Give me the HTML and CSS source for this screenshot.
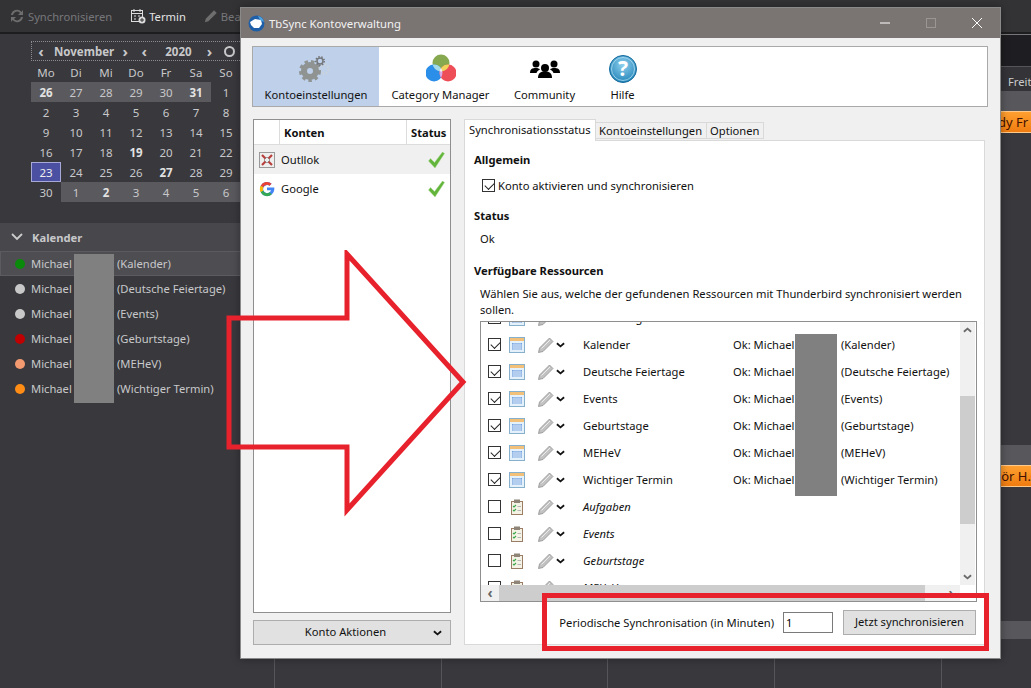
FILE: index.html
```html
<!DOCTYPE html>
<html>
<head>
  <meta charset="utf-8">
  <title>TbSync Kontoverwaltung</title>
  <link rel="stylesheet" href="styles.css">
</head>
<body>
  <svg class="defs" width="0" height="0">
    <defs>
      <symbol id="cal" viewBox="0 0 16 16">
        <rect x="0.5" y="0.5" width="15" height="15" fill="#e4f0fa" stroke="#86b0cc"/>
        <rect x="1" y="1" width="14" height="3" fill="#f3c07a"/>
        <rect x="3" y="6" width="10" height="7" fill="#6f9fe0"/>
        <path d="M5 6v7M7 6v7M9 6v7M11 6v7M3 8h10M3 10h10M3 12h10" stroke="#dbe8f8" stroke-width="0.8"/>
      </symbol>
      <symbol id="task" viewBox="0 0 16 16">
        <rect x="2.5" y="2.5" width="11" height="13" fill="#f5f3e6" stroke="#9a7d64"/>
        <rect x="5" y="0.5" width="6" height="3.5" fill="#8f8478"/>
        <path d="M4 7l1 1 2-2M4 11l1 1 2-2" fill="none" stroke="#3aa84a" stroke-width="1.1"/>
        <path d="M8.5 7.5h3.5M8.5 11.5h3.5" stroke="#b5b5b5"/>
      </symbol>
      <symbol id="pencil" viewBox="0 0 16 16">
        <path d="M0.500 15.500l1-4.500L11.500 1l3.500 3.500L5 14.500z" fill="#c2c2c2" stroke="#8f8f8f" stroke-width="0.8"/>
        <path d="M3.500 11.500l8.500-8.500" stroke="#ececec"/>
      </symbol>
      <symbol id="chev" viewBox="0 0 10 6">
        <path d="M1 1l4 3.500L9 1" fill="none" stroke="#111" stroke-width="2"/>
      </symbol>
      <symbol id="tick" viewBox="0 0 16 16">
        <path d="M0 9l2-2.500 4 4L14 0l2 1.500L6.500 16z" fill="#62b53a" stroke="#a6d890" stroke-width="0.5"/>
      </symbol>
      <clipPath id="clipGreen"><circle cx="15" cy="9" r="8.500"/></clipPath>
      <clipPath id="clipBlue"><circle cx="8" cy="19" r="8.500"/></clipPath>
      <clipPath id="clipRed"><circle cx="22" cy="19" r="8.500"/></clipPath>
      <radialGradient id="helpBlue" cx="0.5" cy="0.35" r="0.7">
        <stop offset="0" stop-color="#8fd0ee"/>
        <stop offset="1" stop-color="#1b7fb5"/>
      </radialGradient>
    </defs>
  </svg>

  <div class="app">
    <div class="app-toolbar">
      <div class="tool disabled">
        <svg width="16" height="16" viewBox="0 0 16 16"><path d="M2 7a6 6 0 0 1 10.500-3L14 2v5H9l2-2A4 4 0 0 0 4 7zM14 9a6 6 0 0 1-10.500 3L2 14V9h5l-2 2a4 4 0 0 0 7-2z" fill="#6e6e6e"/></svg>
        <span>Synchronisieren</span>
      </div>
      <div class="tool">
        <svg width="16" height="16" viewBox="0 0 16 16"><rect x="1.500" y="2.500" width="11" height="11" fill="none" stroke="#ddd"/><path d="M4 1v3M10 1v3M1.500 5.500h11M4 8h2M8 8h2M4 11h2" stroke="#ddd"/><circle cx="12" cy="12" r="3.500" fill="#ddd"/><path d="M10 12h4M12 10v4" stroke="#333"/></svg>
        <span>Termin</span>
      </div>
      <div class="tool disabled">
        <svg width="14" height="14" viewBox="0 0 16 16"><path d="M1 15l1-4L11.500 1.500l3 3L5 14z" fill="#6e6e6e"/></svg>
        <span>Bearbeiten</span>
      </div>
    </div>

    <div class="app-body">
      <aside class="sidebar">
        <div class="minimonth">
          <div class="mm-head">
            <span class="mm-arrow">‹</span><b class="mm-month">November</b><span class="mm-arrow">›</span>
            <span class="mm-arrow">‹</span><b class="mm-year">2020</b><span class="mm-arrow">›</span>
            <span class="mm-today"></span>
          </div>
          <div class="mm-grid">
            <span>Mo</span><span>Di</span><span>Mi</span><span>Do</span><span>Fr</span><span>Sa</span><span>So</span>
            <span class="other bold">26</span><span class="other">27</span><span class="other">28</span><span class="other">29</span><span class="other">30</span><span class="other bold">31</span><span>1</span>
            <span>2</span><span>3</span><span>4</span><span>5</span><span>6</span><span>7</span><span>8</span>
            <span>9</span><span>10</span><span>11</span><span>12</span><span>13</span><span>14</span><span>15</span>
            <span>16</span><span>17</span><span>18</span><span class="bold">19</span><span>20</span><span>21</span><span>22</span>
            <span class="selected">23</span><span>24</span><span>25</span><span>26</span><span class="bold">27</span><span>28</span><span>29</span>
            <span>30</span><span class="other">1</span><span class="other bold">2</span><span class="other">3</span><span class="other">4</span><span class="other">5</span><span class="other">6</span>
          </div>
        </div>

        <div class="cal-head">
          <svg width="12" height="8" viewBox="0 0 12 8"><path d="M1 1l5 5 5-5" fill="none" stroke="#ccc" stroke-width="1.800"/></svg>
          <b>Kalender</b>
        </div>
        <ul class="cal-list">
          <li class="active"><i class="dot green"></i><span class="cal-owner">Michael</span>(Kalender)</li>
          <li><i class="dot grey"></i><span class="cal-owner">Michael</span>(Deutsche Feiertage)</li>
          <li><i class="dot grey"></i><span class="cal-owner">Michael</span>(Events)</li>
          <li><i class="dot red"></i><span class="cal-owner">Michael</span>(Geburtstage)</li>
          <li><i class="dot salmon"></i><span class="cal-owner">Michael</span>(MEHeV)</li>
          <li><i class="dot orange"></i><span class="cal-owner">Michael</span>(Wichtiger Termin)</li>
        </ul>
      </aside>

      <main class="week-view">
        <div class="week-tabs"></div>
        <div class="week-days">Freit</div>
        <div class="week-band"></div>
        <div class="week-event event-top">ddy Fr</div>
        <div class="week-gap first"></div>
        <div class="week-band"></div>
        <div class="week-event event-mid">sör H.G</div>
        <div class="week-gap second"></div>
        <div class="week-band short"></div>
        <div class="week-gap lines"></div>
      </main>
    </div>
  </div>

  <div class="window">
    <div class="titlebar">
      <svg class="app-icon" width="17" height="17" viewBox="0 0 17 17">
        <circle cx="8.500" cy="8.500" r="8" fill="#1f5fa8"/>
        <path d="M2 7l5-3 6 1 1 4-3 4H6L3 10z" fill="#fff"/>
        <path d="M10 1a8 8 0 0 1 6 6l-4-2z" fill="#4fa3e0"/>
      </svg>
      <span class="title-text">TbSync Kontoverwaltung</span>
      <div class="win-controls">
        <svg width="12" height="12" viewBox="0 0 12 12"><path d="M1 6h10" stroke="#fff"/></svg>
        <svg width="12" height="12" viewBox="0 0 12 12"><rect x="1.500" y="1.500" width="9" height="9" fill="none" stroke="#9b9694"/></svg>
        <svg width="12" height="12" viewBox="0 0 12 12"><path d="M1 1l10 10M11 1L1 11" stroke="#fff"/></svg>
      </div>
    </div>

    <div class="window-body">
      <nav class="main-nav">
        <div class="nav-item selected settings">
          <svg width="34" height="30" viewBox="0 0 34 30">
            <circle cx="25" cy="15" r="4.500" fill="none" stroke="#c8d2de" stroke-width="3" stroke-dasharray="2 1.500"/>
            <circle cx="11" cy="17" r="6" fill="none" stroke="#8f9492" stroke-width="6"/>
            <circle cx="11" cy="17" r="9.500" fill="none" stroke="#8f9492" stroke-width="3" stroke-dasharray="3.500 3"/>
            <circle cx="21" cy="7" r="3" fill="none" stroke="#74777a" stroke-width="1.500"/>
            <circle cx="21" cy="7" r="4.300" fill="none" stroke="#74777a" stroke-width="1.500" stroke-dasharray="1.500 1.500"/>
          </svg>
          <span>Kontoeinstellungen</span>
        </div>
        <div class="nav-item category">
          <svg width="30" height="28" viewBox="0 0 30 28">
            <circle cx="15" cy="9" r="8.500" fill="#86a84e"/>
            <circle cx="8" cy="19" r="8.500" fill="#2b8fe9"/>
            <circle cx="22" cy="19" r="8.500" fill="#ee4e58"/>
            <g clip-path="url(#clipGreen)"><circle cx="8" cy="19" r="8.500" fill="#a5dbe6"/><circle cx="22" cy="19" r="8.500" fill="#f2d35c"/></g>
            <g clip-path="url(#clipBlue)"><circle cx="22" cy="19" r="8.500" fill="#d9a8e6"/></g>
            <g clip-path="url(#clipBlue)"><g clip-path="url(#clipRed)"><circle cx="15" cy="9" r="8.500" fill="#f4f2f2"/></g></g>
          </svg>
          <span>Category Manager</span>
        </div>
        <div class="nav-item community">
          <svg width="30" height="24" viewBox="0 0 30 24">
            <circle cx="6" cy="6" r="3.500"/><path d="M0 15c0-4 2-5 6-5 2 0 3 .5 4 1.500-2 1-3 2-3.500 3.500z"/>
            <circle cx="24" cy="6" r="3.500"/><path d="M30 15c0-4-2-5-6-5-2 0-3 .5-4 1.500 2 1 3 2 3.500 3.500z"/>
            <circle cx="15" cy="10" r="4"/><path d="M8 20c0-5 2.500-6.500 7-6.500s7 1.500 7 6.500z"/>
          </svg>
          <span>Community</span>
        </div>
        <div class="nav-item help">
          <svg width="30" height="30" viewBox="0 0 30 30">
            <circle cx="15" cy="15" r="13.500" fill="url(#helpBlue)" stroke="#136a9c"/>
            <circle cx="15" cy="15" r="11.500" fill="none" stroke="#bfe6f7" stroke-width="0.700"/>
            <text x="15" y="22" text-anchor="middle" class="help-mark">?</text>
          </svg>
          <span>Hilfe</span>
        </div>
      </nav>

      <div class="split">
        <div class="accounts">
          <div class="account-list">
            <div class="account-head">
              <span class="col-icon"></span>
              <span class="col-name">Konten</span>
              <span class="col-status">Status</span>
            </div>
            <div class="account-row current">
              <svg class="acc-icon" width="16" height="16" viewBox="0 0 16 16">
                <rect x="0.500" y="0.500" width="15" height="15" fill="#eee" stroke="#999"/>
                <path d="M3 3l10 10M13 3L3 13" stroke="#b8403c" stroke-width="2.200"/>
                <path d="M5 8l3-3 3 3-3 3z" fill="#eee" stroke="#777" stroke-width="0.700"/>
              </svg>
              <span class="acc-name">Outllok</span>
              <svg width="17" height="16"><use href="#tick"/></svg>
            </div>
            <div class="account-row">
              <svg class="acc-icon" width="16" height="16" viewBox="0 0 16 16">
                <path d="M8 6.500h7.300c.5 4.800-2.600 8.500-7.300 8.500a7 7 0 1 1 4.600-12.300l-2.100 2.100A4 4 0 1 0 12 9.300H8z" fill="#4285f4"/>
                <path d="M1.700 4.700A7 7 0 0 1 12.600 2.700l-2.100 2.100A4 4 0 0 0 4.300 6.200z" fill="#ea4335"/>
                <path d="M1.700 11.300a7 7 0 0 1 0-6.600l2.600 1.500a4 4 0 0 0 0 3.600z" fill="#fbbc05"/>
                <path d="M1.700 11.300l2.600-1.500A4 4 0 0 0 10.500 11.300l2.300 1.900A7 7 0 0 1 1.700 11.300z" fill="#34a853"/>
              </svg>
              <span class="acc-name">Google</span>
              <svg width="17" height="16"><use href="#tick"/></svg>
            </div>
          </div>
          <button class="btn actions-btn">
            <span>Konto Aktionen</span>
            <svg width="9" height="6"><use href="#chev"/></svg>
          </button>
        </div>

        <div class="details">
          <div class="tabs">
            <div class="tab active">Synchronisationsstatus</div>
            <div class="tab">Kontoeinstellungen</div>
            <div class="tab">Optionen</div>
          </div>
          <div class="tab-panel">
            <div class="group-title">Allgemein</div>
            <label class="enable-row"><span class="check on"></span>Konto aktivieren und synchronisieren</label>
            <div class="group-title status-title">Status</div>
            <div class="status-value">Ok</div>
            <div class="group-title res-title">Verfügbare Ressourcen</div>
            <p class="res-desc">Wählen Sie aus, welche der gefundenen Ressourcen mit Thunderbird synchronisiert werden sollen.</p>

            <div class="res-box">
              <div class="res-scroll">
                <div class="res-rows">
                  <div class="res-row"><span class="check"></span><svg class="t"><use href="#cal"/></svg><svg class="p"><use href="#pencil"/></svg><svg class="c"><use href="#chev"/></svg><span class="res-name">Geburtstage</span></div>
                  <div class="res-row"><span class="check on"></span><svg class="t"><use href="#cal"/></svg><svg class="p"><use href="#pencil"/></svg><svg class="c"><use href="#chev"/></svg><span class="res-name">Kalender</span><span class="res-owner">Ok: Michael</span><span>(Kalender)</span></div>
                  <div class="res-row"><span class="check on"></span><svg class="t"><use href="#cal"/></svg><svg class="p"><use href="#pencil"/></svg><svg class="c"><use href="#chev"/></svg><span class="res-name">Deutsche Feiertage</span><span class="res-owner">Ok: Michael</span><span>(Deutsche Feiertage)</span></div>
                  <div class="res-row"><span class="check on"></span><svg class="t"><use href="#cal"/></svg><svg class="p"><use href="#pencil"/></svg><svg class="c"><use href="#chev"/></svg><span class="res-name">Events</span><span class="res-owner">Ok: Michael</span><span>(Events)</span></div>
                  <div class="res-row"><span class="check on"></span><svg class="t"><use href="#cal"/></svg><svg class="p"><use href="#pencil"/></svg><svg class="c"><use href="#chev"/></svg><span class="res-name">Geburtstage</span><span class="res-owner">Ok: Michael</span><span>(Geburtstage)</span></div>
                  <div class="res-row"><span class="check on"></span><svg class="t"><use href="#cal"/></svg><svg class="p"><use href="#pencil"/></svg><svg class="c"><use href="#chev"/></svg><span class="res-name">MEHeV</span><span class="res-owner">Ok: Michael</span><span>(MEHeV)</span></div>
                  <div class="res-row"><span class="check on"></span><svg class="t"><use href="#cal"/></svg><svg class="p"><use href="#pencil"/></svg><svg class="c"><use href="#chev"/></svg><span class="res-name">Wichtiger Termin</span><span class="res-owner">Ok: Michael</span><span>(Wichtiger Termin)</span></div>
                  <div class="res-row task"><span class="check"></span><svg class="t"><use href="#task"/></svg><svg class="p"><use href="#pencil"/></svg><svg class="c"><use href="#chev"/></svg><span class="res-name">Aufgaben</span></div>
                  <div class="res-row task"><span class="check"></span><svg class="t"><use href="#task"/></svg><svg class="p"><use href="#pencil"/></svg><svg class="c"><use href="#chev"/></svg><span class="res-name">Events</span></div>
                  <div class="res-row task"><span class="check"></span><svg class="t"><use href="#task"/></svg><svg class="p"><use href="#pencil"/></svg><svg class="c"><use href="#chev"/></svg><span class="res-name">Geburtstage</span></div>
                  <div class="res-row task"><span class="check"></span><svg class="t"><use href="#task"/></svg><svg class="p"><use href="#pencil"/></svg><svg class="c"><use href="#chev"/></svg><span class="res-name">MEHeV</span></div>
                </div>
                <div class="vscroll">
                  <svg width="9" height="6" class="up"><use href="#chev"/></svg>
                  <div class="vthumb"></div>
                  <svg width="9" height="6"><use href="#chev"/></svg>
                </div>
              </div>
              <div class="hscroll">
                <span class="h-arrow">‹</span>
                <div class="hthumb"></div>
                <span class="h-arrow">›</span>
              </div>
            </div>

            <div class="sync-row">
              <span>Periodische Synchronisation (in Minuten)</span>
              <input class="minutes" type="text" value="1">
              <button class="btn sync-btn">Jetzt synchronisieren</button>
            </div>
          </div>
        </div>
      </div>
    </div>
  </div>

  <!-- drawn on top of the screenshot -->
  <div class="redact redact-sidebar"></div>
  <div class="redact redact-list"></div>
  <svg class="arrow" width="250" height="270" viewBox="0 0 250 270">
    <polygon points="3,68 121,68 121,4 237,132 121,260 121,197 3,197" fill="none" stroke="#e8222d" stroke-width="5"/>
  </svg>
  <div class="red-box"></div>
</body>
</html>
```

FILE: styles.css
```css
* {
  box-sizing: border-box;
}

html, body {
  margin: 0;
  height: 100%;
  overflow: hidden;
}

body {
  position: relative;
  font-family: "Noto Sans", "Open Sans", sans-serif;
  font-size: 11.2px;
  color: #111;
  background: #38383d;
}

.defs {
  position: absolute;
}

/* thunderbird behind the dialog */
.app {
  height: 688px;
  display: flex;
  flex-direction: column;
}

.app-toolbar {
  height: 34px;
  flex-shrink: 0;
  display: flex;
  align-items: center;
  gap: 18px;
  padding-left: 9px;
  background: #333336;
  border-bottom: 2px solid #1d1d20;
  color: #e4e4e4;
}

.tool {
  display: flex;
  align-items: center;
  gap: 3px;
  white-space: nowrap;
}

.tool.disabled {
  color: #77777a;
}

.app-body {
  flex: 1;
  display: flex;
  min-height: 0;
}

.sidebar {
  width: 240px;
  flex-shrink: 0;
  color: #c8c8ca;
}

.minimonth {
  margin: 7px 0 0 31px;
  width: 209px;
  font-size: 11.5px;
}

.mm-head {
  height: 20px;
  display: flex;
  align-items: center;
  border: 1px dotted #8d8d8f;
  border-right: none;
  padding-left: 4px;
  white-space: nowrap;
}

.mm-arrow {
  font-size: 15px;
  font-weight: bold;
  line-height: 16px;
  width: 10px;
  text-align: center;
}

.mm-month {
  margin: 0 6px 0 8px;
  font-size: 11.500px;
}

.mm-arrow + .mm-arrow {
  margin-left: 9px;
}

.mm-year {
  margin: 0 13px 0 16px;
}

.mm-today {
  width: 11px;
  height: 11px;
  margin-left: 9px;
  border: 2.500px solid #c8c8ca;
  border-radius: 50%;
}

.mm-grid {
  display: grid;
  grid-template-columns: repeat(7, 30px);
  grid-auto-rows: 20px;
  margin-top: 1px;
  width: 210px;
}

.mm-grid span {
  display: flex;
  align-items: center;
  justify-content: center;
}

.mm-grid .other {
  background: #5a5a5e;
}

.mm-grid .bold {
  font-weight: bold;
  color: #e2e2e2;
}

.mm-grid .selected {
  background: #4b50a2;
  border: 1px solid #a6a8d8;
  color: #eee;
}

.cal-head {
  margin-top: 21px;
  height: 28px;
  display: flex;
  align-items: center;
  gap: 9px;
  padding-left: 11px;
  background: #47474c;
}

.cal-list {
  list-style: none;
  margin: 0;
  padding: 0;
}

.cal-list li {
  height: 25px;
  display: flex;
  align-items: center;
  padding-left: 15px;
  white-space: nowrap;
}

.cal-list li.active {
  background: #4d4d52;
  border: 1px solid #5c5c60;
  border-right: none;
  padding-left: 14px;
}

.dot {
  width: 10px;
  height: 10px;
  margin-right: 6px;
  border-radius: 50%;
}

.dot.green { background: #0a8a0a; }
.dot.grey { background: #c8c8c8; }
.dot.red { background: #c00000; }
.dot.salmon { background: #f49a70; }
.dot.orange { background: #ff8c14; }

.cal-owner {
  width: 86px;
}

.week-view {
  flex: 1;
  display: flex;
  flex-direction: column;
  color: #ccc;
  white-space: nowrap;
}

.week-tabs {
  height: 32px;
  background: #1e1e22;
  border-top: 1px solid #77777a;
}

.week-days {
  height: 25px;
  padding: 7px 0 0 768px;
  background: #343438;
  border-top: 1px solid #56565a;
}

.week-band {
  height: 20px;
  background: #58585c;
}

.week-band.short {
  height: 18px;
}

.week-event {
  height: 22px;
  line-height: 20px;
  background: linear-gradient(#ffa030, #f07c10);
  border-top: 1px solid #ffc98a;
  border-bottom: 1px solid #ffc98a;
  color: #401000;
  font-size: 13px;
}

.event-top {
  padding-left: 750px;
}

.event-mid {
  padding-left: 755px;
}

.week-gap.first {
  height: 312px;
}

.week-gap.second {
  height: 134px;
}

.week-gap.lines {
  flex: 1;
  background: repeating-linear-gradient(to right, #56565a 0 1px, transparent 1px 166.700px) 34px 0;
}

/* dialog */
.window {
  position: absolute;
  left: 240px;
  top: 7px;
  width: 761px;
  height: 652px;
  display: flex;
  flex-direction: column;
  background: #f0f0f0;
  border: 1px solid #8a8a8a;
  box-shadow: 0 0 8px rgba(0, 0, 0, 0.35);
}

.titlebar {
  height: 30px;
  flex-shrink: 0;
  display: flex;
  align-items: center;
  padding-left: 7px;
  background: #7a7472;
  color: #f2f2f2;
}

.title-text {
  margin-left: 4px;
  font-size: 11.300px;
}

.win-controls {
  margin-left: auto;
  display: flex;
  gap: 34px;
  padding-right: 17px;
}

.window-body {
  flex: 1;
  padding: 8px 12px 13px 11px;
  display: flex;
  flex-direction: column;
}

.main-nav {
  height: 61px;
  flex-shrink: 0;
  display: flex;
  background: #fff;
  border: 1px solid #a9a9a9;
}

.nav-item {
  display: flex;
  flex-direction: column;
  align-items: center;
  justify-content: space-between;
  padding: 7px 0 4px;
  height: 100%;
}

.nav-item.selected {
  background: #bed0ea;
}

.settings { width: 126px; }
.category { width: 123px; }
.community { width: 85px; }
.help { width: 71px; }

.community svg {
  margin-top: 4px;
  fill: #000;
}

.help-mark {
  fill: #fff;
  font-size: 21px;
  font-weight: bold;
}

.split {
  flex: 1;
  display: flex;
  margin-top: 12px;
  padding-left: 1px;
}

.accounts {
  width: 198px;
  flex-shrink: 0;
  display: flex;
  flex-direction: column;
  gap: 7px;
}

.account-list {
  flex: 1;
  background: #fff;
  border: 1px solid #8f8f8f;
}

.account-head {
  height: 25px;
  display: flex;
  border-bottom: 1px solid #dcdcdc;
  font-weight: bold;
}

.account-head span {
  display: flex;
  align-items: center;
}

.col-icon {
  width: 26px;
  border-right: 1px solid #dcdcdc;
}

.col-name {
  width: 127px;
  padding-left: 4px;
  border-right: 1px solid #dcdcdc;
}

.col-status {
  padding-left: 4px;
}

.account-row {
  height: 29px;
  display: flex;
  align-items: center;
  padding: 0 5px;
}

.account-row.current {
  background: #f0f0f0;
}

.acc-icon {
  margin-right: 6px;
}

.acc-name {
  flex: 1;
}

.btn {
  font: inherit;
  color: #111;
  background: #e1e1e1;
  border: 1px solid #adadad;
  padding: 0 0 2px;
}

.actions-btn {
  height: 25px;
  display: flex;
  align-items: center;
  justify-content: center;
  padding-right: 13px;
  position: relative;
}

.actions-btn svg {
  position: absolute;
  right: 8px;
  top: 9px;
}

.details {
  flex: 1;
  margin-left: 13px;
  margin-right: 3px;
  display: flex;
  flex-direction: column;
}

.tabs {
  display: flex;
  align-items: flex-end;
  height: 21px;
  flex-shrink: 0;
  position: relative;
  z-index: 1;
}

.tab {
  height: 17px;
  margin-bottom: 1px;
  padding: 0 3.500px;
  line-height: 15px;
  border: 1px solid #d9d9d9;
  border-left: none;
  white-space: nowrap;
}

.tab.active {
  height: 22px;
  margin-bottom: -1px;
  padding: 0 4px;
  line-height: 19px;
  background: #fff;
  border-left: 1px solid #d9d9d9;
  border-bottom: none;
}

.tab-panel {
  flex: 1;
  background: #fff;
  border: 1px solid #d9d9d9;
  padding: 11px 8px 0 9px;
}

.group-title {
  height: 16px;
  line-height: 16px;
  font-weight: bold;
}

.enable-row {
  display: flex;
  align-items: center;
  height: 16px;
  margin: 9px 0 0 8px;
}

.check {
  width: 13px;
  height: 13px;
  flex-shrink: 0;
  margin-right: 3px;
  background: #fff;
  border: 1px solid #333;
  position: relative;
}

.check.on::after {
  content: "";
  position: absolute;
  left: 2px;
  top: 0;
  width: 8px;
  height: 5px;
  margin-top: 2px;
  border-left: 1px solid #222;
  border-bottom: 1px solid #222;
  transform: rotate(-45deg) scale(0.95);
}

.status-title {
  margin-top: 15px;
}

.status-value {
  height: 16px;
  line-height: 16px;
  margin: 7px 0 0 6px;
}

.res-title {
  margin-top: 16px;
}

.res-desc {
  margin: 7px 0 0 6px;
  width: 492px;
  line-height: 16px;
}

.res-box {
  height: 281px;
  margin: 3px -1px 0 6px;
  display: flex;
  flex-direction: column;
  border: 1px solid #8f8f8f;
}

.res-scroll {
  flex: 1;
  display: flex;
  min-height: 0;
}

.res-rows {
  flex: 1;
  overflow: hidden;
}

.res-row {
  height: 27px;
  display: flex;
  align-items: center;
  padding-left: 7px;
  white-space: nowrap;
}

.res-row:first-child {
  margin-top: -18px;
}

.res-row svg.t {
  width: 16px;
  height: 16px;
  margin-left: 5px;
}

.res-row svg.p {
  width: 16px;
  height: 16px;
  margin-left: 13px;
}

.res-row svg.c {
  width: 9px;
  height: 6px;
  margin-left: 2px;
}

.res-row.task .res-name {
  font-style: italic;
}

.res-name {
  width: 150px;
  margin-left: 18px;
  flex-shrink: 0;
}

.res-owner {
  width: 108px;
  flex-shrink: 0;
}

.vscroll {
  width: 15px;
  flex-shrink: 0;
  margin-right: 1px;
  display: flex;
  flex-direction: column;
  align-items: center;
  justify-content: space-between;
  padding: 5px 0;
  background: #f0f0f0;
  position: relative;
}

.vscroll svg {
  opacity: 0.6;
}

.vscroll .up {
  transform: rotate(180deg);
}

.vthumb {
  position: absolute;
  left: 0;
  right: 0;
  top: 74px;
  height: 128px;
  background: #cdcdcd;
}

.hscroll {
  height: 16px;
  flex-shrink: 0;
  display: flex;
  align-items: center;
  margin-right: 16px;
  background: #f0f0f0;
}

.h-arrow {
  width: 18px;
  text-align: center;
  font-size: 14px;
  font-weight: bold;
  line-height: 14px;
  color: #666;
}

.hthumb {
  width: 426px;
  height: 100%;
  background: #cdcdcd;
}

.h-arrow:last-child {
  margin-left: auto;
}

.sync-row {
  display: flex;
  align-items: center;
  justify-content: flex-end;
  height: 25px;
  margin-top: 8px;
}

.minutes {
  width: 50px;
  height: 21px;
  margin: 0 10px 0 9px;
  padding: 0 2px;
  font: inherit;
  border: 1px solid #7a7a7a;
}

.sync-btn {
  width: 133px;
  height: 25px;
}

/* annotations */
.redact {
  position: absolute;
  background: #808080;
}

.redact-sidebar {
  left: 74px;
  top: 254px;
  width: 40px;
  height: 149px;
}

.redact-list {
  left: 795px;
  top: 334px;
  width: 42px;
  height: 162px;
}

.arrow {
  position: absolute;
  left: 226px;
  top: 250px;
}

.red-box {
  position: absolute;
  left: 542px;
  top: 593px;
  width: 447px;
  height: 58px;
  border: 5px solid #e8222d;
}
```
